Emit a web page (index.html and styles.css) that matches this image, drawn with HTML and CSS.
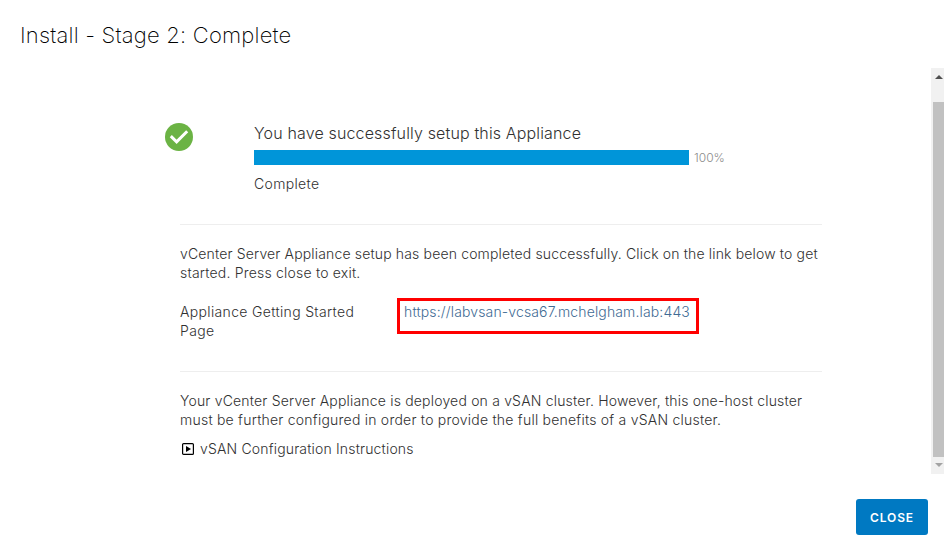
FILE: index.html
```
<!DOCTYPE html>
<html lang="en">
<head>
    <meta charset="UTF-8">
    <meta name="viewport" content="width=device-width, initial-scale=1.0">
    <title>Install - Stage 2: Complete</title>
    <link rel="stylesheet" href="styles.css">
</head>
<body>
    <div class="modal">
        <h1 class="modal-title"><span class="t title">Install - Stage 2: Complete</span></h1>

        <div class="modal-body">
            <div class="content">
                <div class="status">
                    <svg class="status-icon" viewBox="0 0 28 28">
                        <circle cx="14" cy="14" r="14" fill="#6bb344"/>
                        <path d="M5.8 13.2l5.8 5.6L22.2 8.2" fill="none" stroke="#fff" stroke-width="3"/>
                    </svg>
                    <div class="status-info">
                        <div class="status-title"><span class="t heading">You have successfully setup this Appliance</span></div>
                        <div class="progress">
                            <div class="progress-bar"></div>
                            <span class="t progress-value">100%</span>
                        </div>
                        <div class="status-text"><span class="t complete">Complete</span></div>
                    </div>
                </div>

                <div class="section">
                    <p><span class="t done-1">vCenter Server Appliance setup has been completed successfully. Click on the link below to get</span><br><span class="t done-2">started. Press close to exit.</span></p>
                    <div class="link-row">
                        <div class="link-label"><span class="t label">Appliance Getting Started</span><br><span class="t label">Page</span></div>
                        <div class="link-box"><a class="t link" href="#">https://labvsan-vcsa67.mchelgham.lab:443</a></div>
                    </div>
                </div>

                <div class="section vsan">
                    <p><span class="t vsan-1">Your vCenter Server Appliance is deployed on a vSAN cluster. However, this one-host cluster</span><br><span class="t vsan-2">must be further configured in order to provide the full benefits of a vSAN cluster.</span></p>
                    <div class="toggle">
                        <svg class="toggle-icon" viewBox="0 0 12 12">
                            <rect x="0.6" y="0.6" width="10.8" height="10.8" rx="1" fill="none" stroke="#000" stroke-width="1.2"/>
                            <path d="M4 3v6l5-3z" fill="#000"/>
                        </svg>
                        <span class="t instructions">vSAN Configuration Instructions</span>
                    </div>
                </div>
            </div>

            <div class="scrollbar">
                <svg class="arrow" viewBox="0 0 8 4"><path d="M0 4l4-4 4 4z" fill="#505050"/></svg>
                <div class="thumb"></div>
                <svg class="arrow" viewBox="0 0 8 4"><path d="M0 0l4 4 4-4z" fill="#a3a3a3"/></svg>
            </div>
        </div>

        <div class="modal-footer">
            <button class="btn">CLOSE</button>
        </div>
    </div>
</body>
</html>
```
FILE: styles.css
```
* {
    box-sizing: border-box;
}

body {
    margin: 0;
    background: #fff;
    color: #313131;
    font-family: Inter, "Liberation Sans", sans-serif;
    font-size: 14px;
    font-weight: 300;
    line-height: 19px;
    overflow: hidden;
}

p {
    margin: 0;
}

.modal {
    height: 556px;
    display: flex;
    flex-direction: column;
}

.modal-title {
    height: 68px;
    margin: 0;
    padding: 21px 0 0 20px;
    font-size: 22px;
    font-weight: 200;
    line-height: 28px;
    color: #000;
}

.t {
    white-space: nowrap;
}

/* tracking */
.title {
    letter-spacing: 0.2px;
}

.heading {
    letter-spacing: 0.15px;
}

.complete,
.label {
    letter-spacing: 0.34px;
}

.done-1 {
    letter-spacing: 0.155px;
}

.done-2 {
    letter-spacing: 0.2px;
}

.vsan-1 {
    letter-spacing: 0.185px;
}

.vsan-2 {
    letter-spacing: 0.23px;
}

.instructions {
    letter-spacing: 0.17px;
}

.modal-body {
    height: 406px;
    display: flex;
    justify-content: space-between;
}

.content {
    width: 642px;
    margin-left: 180px;
    padding-top: 55px;
}

/* success icon + progress */
.status {
    display: flex;
    height: 101px;
    margin-left: -15px;
}

.status-icon {
    width: 28px;
    height: 28px;
    flex: none;
}

.status-info {
    margin-left: 61px;
}

.status-title {
    height: 27px;
    font-size: 16px;
    line-height: 21px;
}

.progress {
    display: flex;
    align-items: center;
    gap: 5px;
    height: 15px;
}

.progress-bar {
    width: 435px;
    height: 15px;
    background: #0095d9;
}

.progress-value {
    font-size: 12px;
    color: #8c8c8c;
}

.status-text {
    padding-top: 9px;
}

/* text blocks */
.section {
    height: 147px;
    border-top: 1px solid #eee;
    padding-top: 19px;
}

.vsan {
    height: auto;
}

.link-row {
    display: flex;
    margin-top: 16px;
}

.link-label {
    width: 217px;
    padding-top: 4px;
}

.link-box {
    width: 302px;
    height: 36px;
    border: 3px solid #f00;
    padding: 1px 0 0 4px;
}

.link {
    color: #3f6b94;
    letter-spacing: 0.14px;
    text-decoration: none;
}

.toggle {
    display: flex;
    align-items: center;
    gap: 6px;
    margin-top: 10px;
    padding-left: 2px;
}

.toggle-icon {
    width: 12px;
    height: 12px;
    margin-top: 1px;
}

/* scrollbar */
.scrollbar {
    width: 13px;
    padding: 7px 0 7px 2px;
    background: #f1f1f1;
    display: flex;
    flex-direction: column;
    justify-content: space-between;
}

.thumb {
    height: 355px;
    margin-top: 17px;
    background: #c1c1c1;
}

.arrow {
    width: 8px;
    height: 4px;
    margin-left: 2px;
}

/* footer */
.modal-footer {
    display: flex;
    justify-content: flex-end;
    padding: 25px 16px 0 0;
}

.btn {
    width: 72px;
    height: 36px;
    padding: 1px 0 0;
    border: none;
    border-radius: 3px;
    background: #0079c2;
    color: #fff;
    font-family: inherit;
    font-size: 12px;
    font-weight: 600;
    letter-spacing: 0.9px;
    cursor: pointer;
}
```
